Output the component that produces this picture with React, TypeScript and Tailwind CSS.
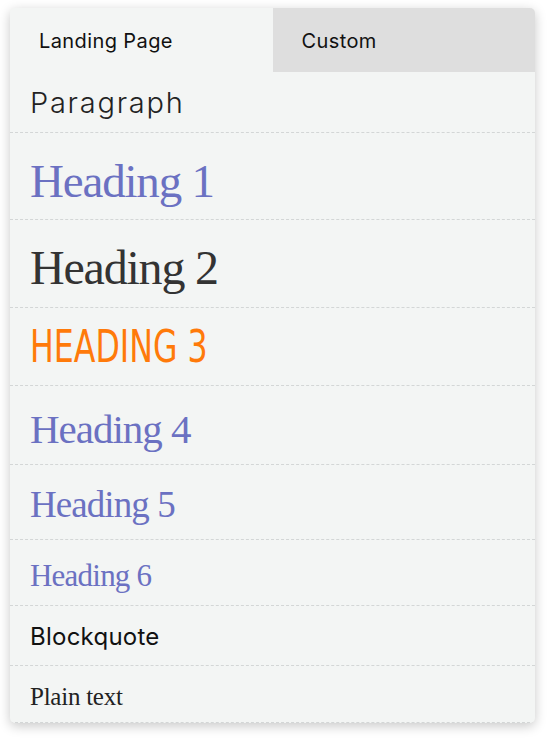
const tabs = ['Landing Page', 'Custom'];

type Style = {
  label: string;
  row: string;
  text: string;
};

// one row per text style in the picker
const styles: Style[] = [
  {
    label: 'Paragraph',
    row: 'h-[61px]',
    text: "font-['Inter',sans-serif] font-light text-[29px] tracking-[0.06em] text-[#222]",
  },
  {
    label: 'Heading 1',
    row: 'h-[87px] pt-[11px]',
    text: "font-['Liberation_Serif',serif] text-[47px] tracking-[-0.025em] text-[#6b71c2]",
  },
  {
    label: 'Heading 2',
    row: 'h-[88px] pt-[9px]',
    text: "font-['Liberation_Serif',serif] text-[48px] tracking-[-0.025em] text-[#333]",
  },
  {
    label: 'HEADING 3',
    row: 'h-[78px]',
    text: "inline-block origin-left scale-x-[0.8] font-['Liberation_Sans_Narrow','DejaVu_Sans_Condensed',sans-serif] text-[44px] text-[#ff7a0a]",
  },
  {
    label: 'Heading 4',
    row: 'h-[79px] pt-[8px]',
    text: "font-['Liberation_Serif',serif] text-[41px] tracking-[-0.025em] text-[#6b71c2]",
  },
  {
    label: 'Heading 5',
    row: 'h-[75px] pt-[5px]',
    text: "font-['Liberation_Serif',serif] text-[37px] tracking-[-0.025em] text-[#6b71c2]",
  },
  {
    label: 'Heading 6',
    row: 'h-[66px] pt-[5px]',
    text: "font-['Liberation_Serif',serif] text-[31px] tracking-[-0.025em] text-[#6b71c2]",
  },
  {
    label: 'Blockquote',
    row: 'h-[60px] pt-[3px]',
    text: "font-['Inter',sans-serif] text-[24px] tracking-[0.01em] text-[#111]",
  },
  {
    label: 'Plain text',
    row: 'h-[57px] pt-[5px]',
    text: "font-['Liberation_Serif',serif] text-[25px] tracking-[-0.01em] text-[#222]",
  },
];

export default function App() {
  return (
    <div className="min-h-screen bg-white pt-2 pl-[10px]">
      <div className="w-[525px] rounded-[5px] bg-[#f3f5f4] overflow-hidden shadow-[0_3px_12px_rgba(0,0,0,0.22)]">
        {/* Tabs */}
        <div className="flex h-16">
          {tabs.map((t, i) => (
            <div
              key={t}
              className={`flex-1 flex items-center pl-[29px] pt-[2px] font-['Inter',sans-serif] text-[20px] tracking-[0.02em] text-[#111] ${
                i === 0 ? 'bg-[#f3f5f4]' : 'bg-[#dedede]'
              }`}
            >
              {t}
            </div>
          ))}
        </div>

        {/* Styles */}
        {styles.map((s) => (
          <div
            key={s.label}
            className={`flex items-center px-5 border-b border-dashed border-[#d3d6d6] ${s.row}`}
          >
            <span className={`leading-none whitespace-nowrap ${s.text}`}>{s.label}</span>
          </div>
        ))}
      </div>
    </div>
  );
}
